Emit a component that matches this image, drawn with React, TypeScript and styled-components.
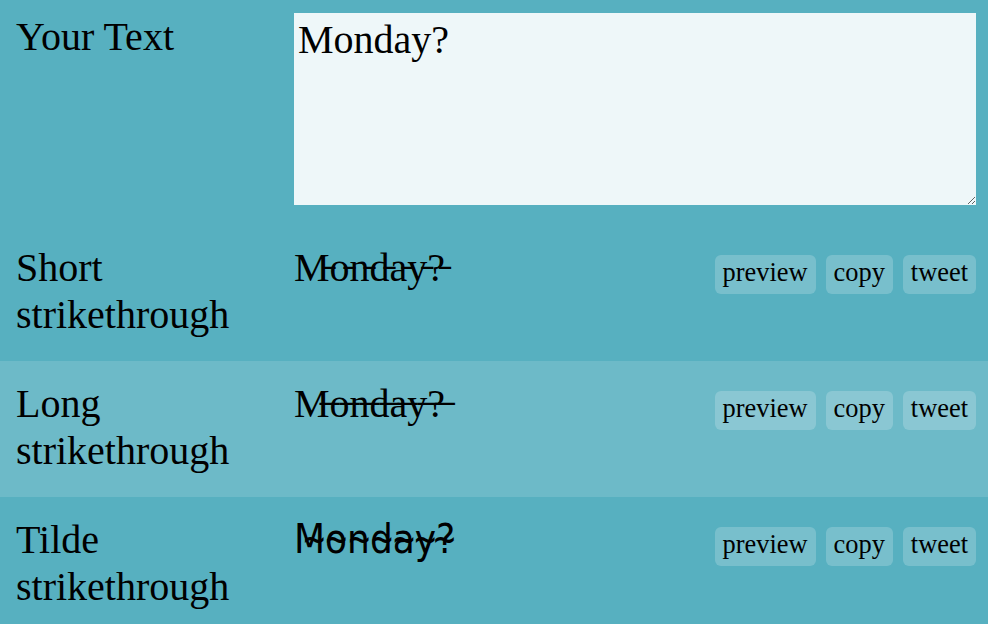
import React, { useState } from 'react'
import styled, { createGlobalStyle } from 'styled-components'

const GlobalStyle = createGlobalStyle`
    html, body {
        margin: 0;
        padding: 0;
        background: #57b0c0;
        font-family: "Liberation Serif", "Times New Roman", serif;
        color: #000;
    }
`

const styles = [
    { name: 'Short strikethrough', mark: '\u0335', sans: false },
    { name: 'Long strikethrough', mark: '\u0336', sans: false },
    { name: 'Tilde strikethrough', mark: '\u0334', sans: true },
]

function strike(text: string, mark: string) {
    return Array.from(text).map(ch => ch + mark).join('')
}

function App() {
    const [text, setText] = useState('Monday?')

    return (
        <React.Fragment>
            <GlobalStyle />
            <Page>
                <InputRow>
                    <Label>Your Text</Label>
                    <TextBox value={text} onChange={e => setText(e.target.value)} />
                </InputRow>
                {styles.map((s, i) => (
                    <Row key={s.name} alt={i % 2 === 1}>
                        <Label>{s.name}</Label>
                        <Result>
                            <Output sans={s.sans}>{strike(text, s.mark)}</Output>
                            <Actions>
                                <Action>preview</Action>
                                <Action>copy</Action>
                                <Action>tweet</Action>
                            </Actions>
                        </Result>
                    </Row>
                ))}
            </Page>
        </React.Fragment>
    )
}

export default App

const Page = styled.div`
    width: 100%;
    min-height: 100vh;
`

const InputRow = styled.div`
    display: grid;
    grid-template-columns: 278px 1fr;
    align-items: start;
    padding: 13px 12px 20px 16px;
`

const Row = styled.div<{ alt: boolean }>`
    display: grid;
    grid-template-columns: 278px 1fr;
    align-items: start;
    height: 136px;
    box-sizing: border-box;
    padding: 19px 12px 0 16px;
    background-color: ${p => (p.alt ? '#6dbac8' : 'transparent')};
`

const Label = styled.div`
    font-size: 40px;
    line-height: normal;
`

const TextBox = styled.textarea`
    display: block;
    box-sizing: border-box;
    width: 100%;
    height: 192px;
    margin: 0;
    padding: 3px 4px;
    border: none;
    outline: none;
    background: rgba(255, 255, 255, 0.9);
    font-family: "Liberation Serif", "Times New Roman", serif;
    font-size: 40px;
    color: #000;
`

const Result = styled.div`
    display: flex;
    align-items: baseline;
`

const Output = styled.div<{ sans: boolean }>`
    flex: 1;
    font-family: ${p => (p.sans ? '"DejaVu Sans Condensed", "DejaVu Sans", sans-serif' : 'inherit')};
    font-size: 40px;
    line-height: normal;
    white-space: pre;
`

const Actions = styled.div`
    display: flex;
    gap: 10px;
`

const Action = styled.button`
    font-family: "Liberation Serif", "Times New Roman", serif;
    font-size: 26.4px;
    line-height: normal;
    padding: 2px 8px 6px;
    border: none;
    border-radius: 6px;
    background: rgba(255, 255, 255, 0.2);
    color: #000;
    cursor: pointer;
`
